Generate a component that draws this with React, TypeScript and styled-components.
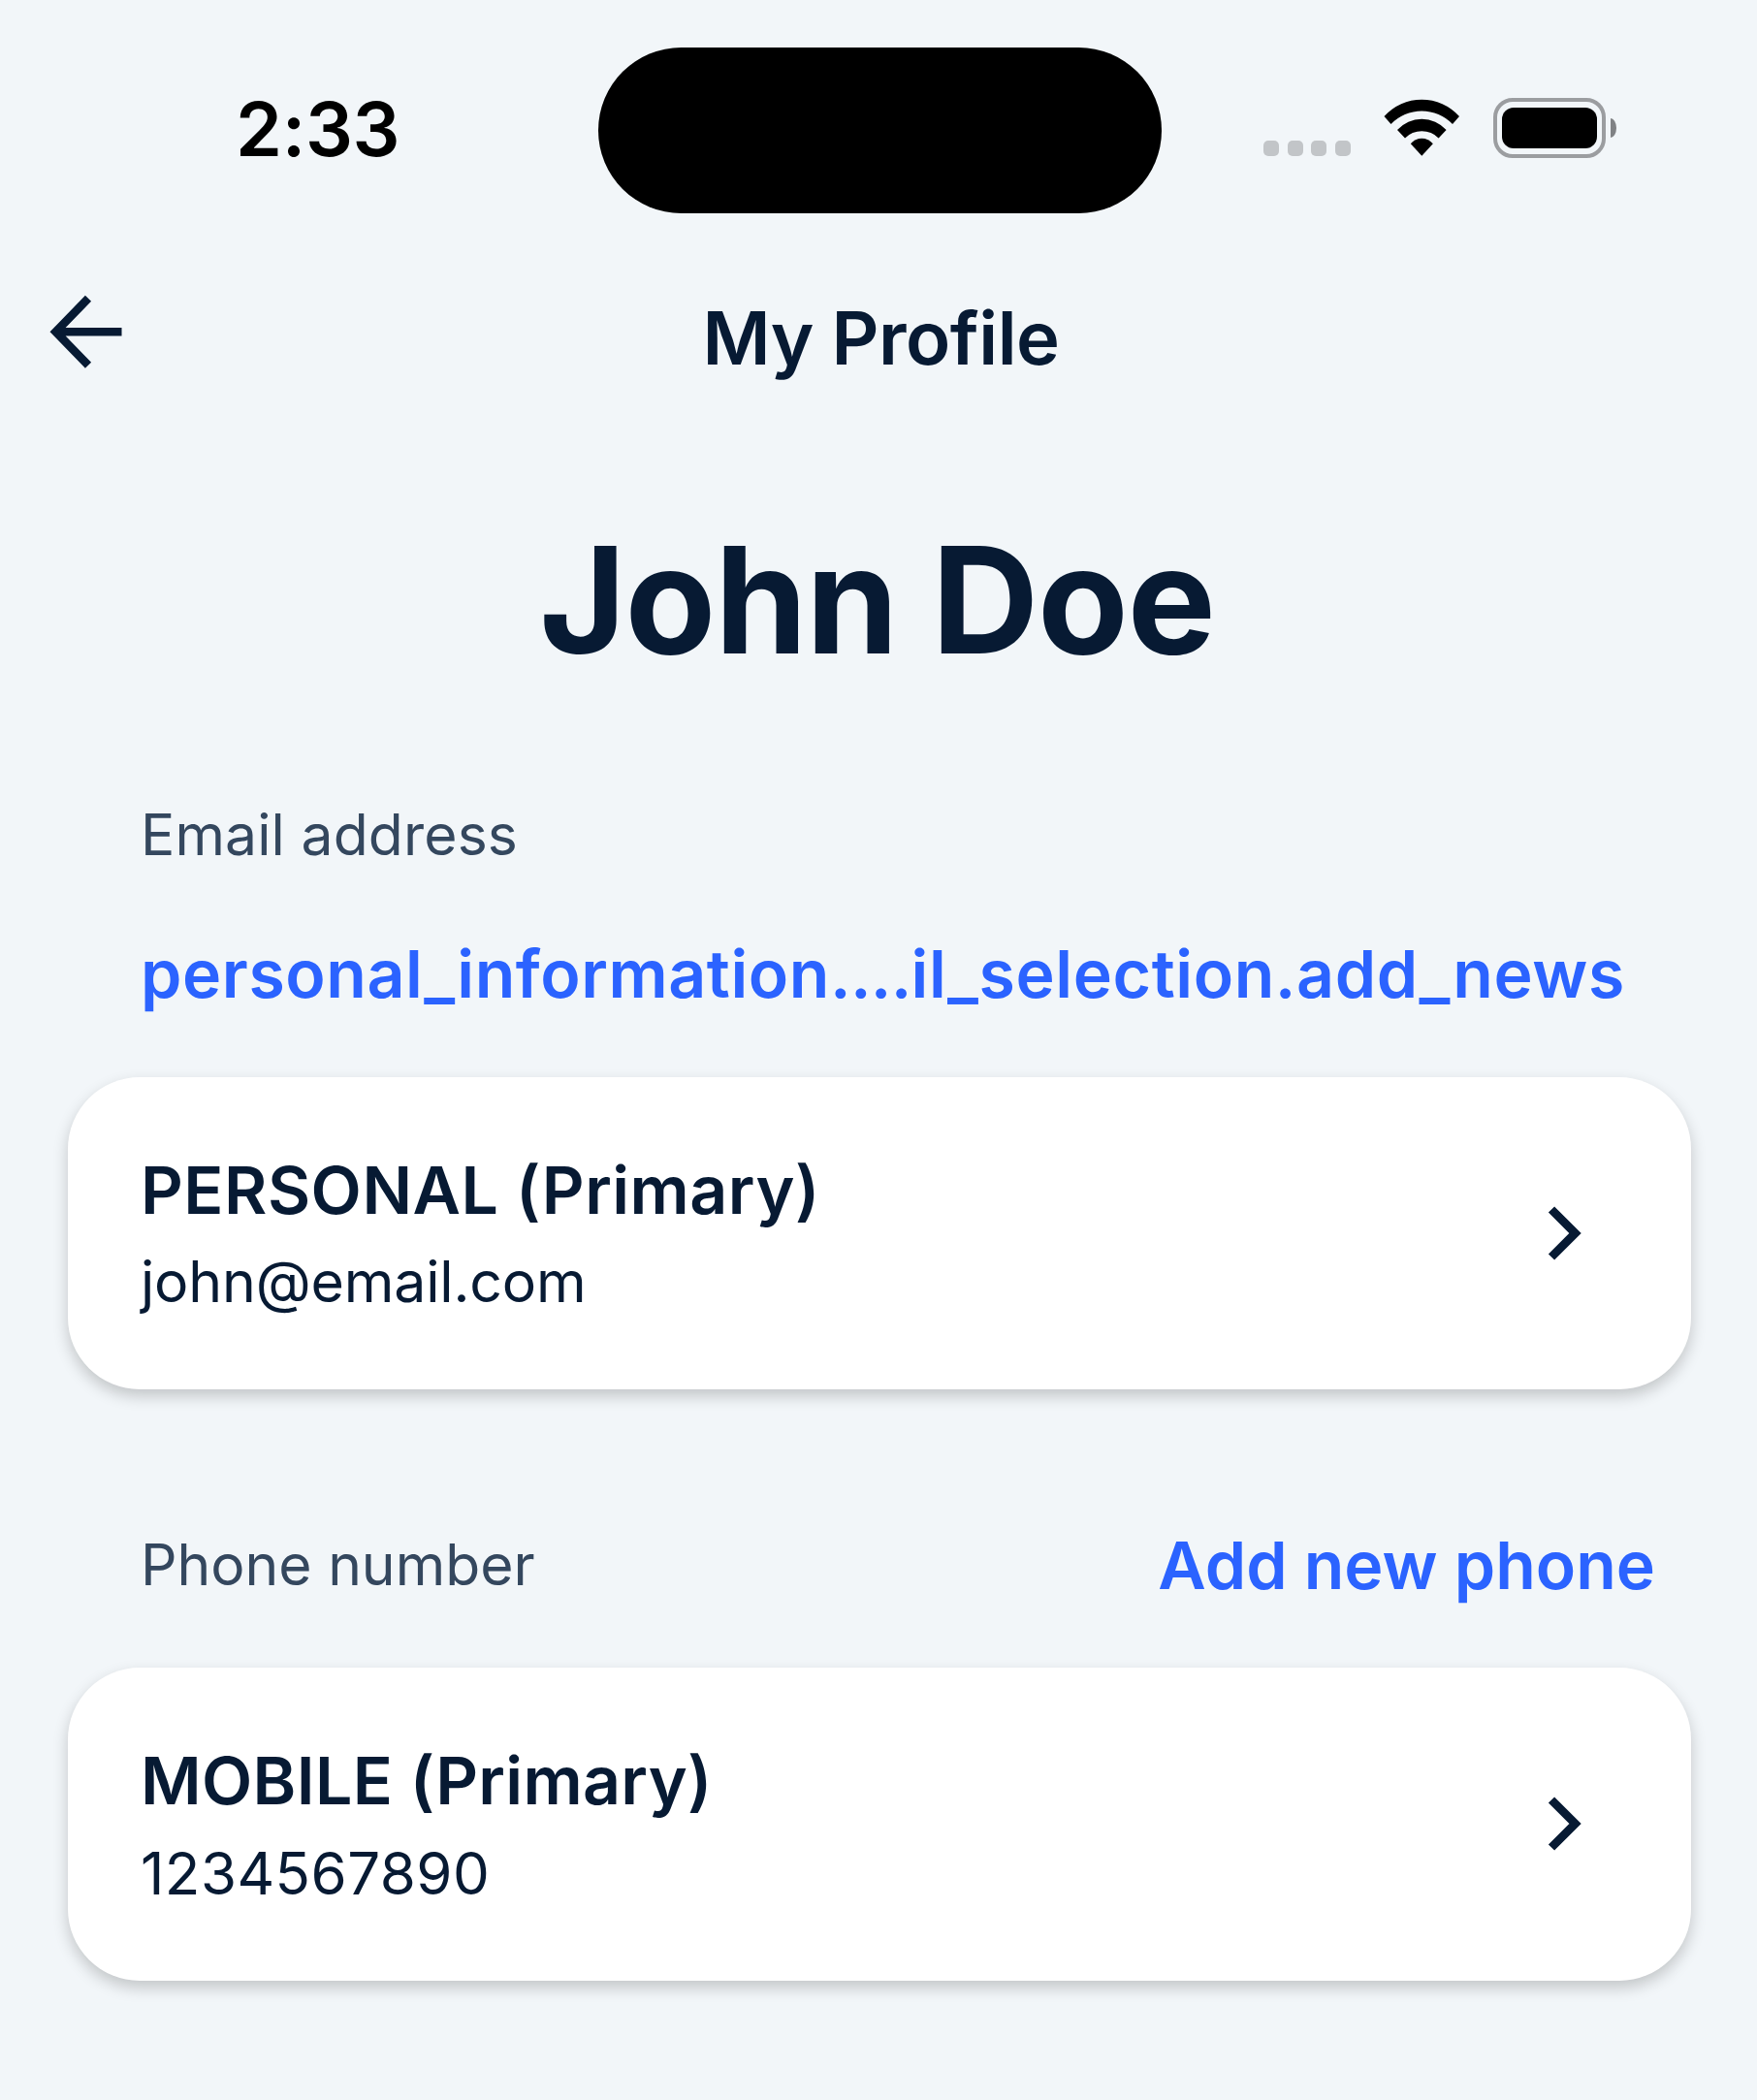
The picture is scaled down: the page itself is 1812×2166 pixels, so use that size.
import React from "react";
import styled, { createGlobalStyle } from "styled-components";

const ink = "#071a33";
const blue = "#2b63ff";

const GlobalStyle = createGlobalStyle`
  *, *::before, *::after { box-sizing: border-box; }
  body { margin: 0; background: #f2f6f9; }
  button { border: 0; padding: 0; background: none; font: inherit; color: inherit; text-align: left; }
  h1, h2, p { margin: 0; }
`;

const Screen = styled.main`
  width: 1812px;
  height: 2166px;
  overflow: hidden;
  background: #f2f6f9;
  color: ${ink};
  font-family: Inter, "Liberation Sans", sans-serif;
  white-space: nowrap;
`;

const StatusBar = styled.div`
  display: grid;
  grid-template-columns: 617px 581px 1fr;
  align-items: center;
  height: 268px;
`;

const Clock = styled.time`
  padding: 0 0 3px 243px;
  font-size: 77px;
  font-weight: 600;
  line-height: 96px;
  letter-spacing: -0.3px;
  color: #000;
`;

const Island = styled.div`
  height: 171px;
  border-radius: 86px;
  background: #000;
`;

const StatusIcons = styled.div`
  display: flex;
  align-items: center;
  padding: 0 0 4px 105px;
`;

const SignalDots = styled.div`
  display: flex;
  gap: 8.6px;
  padding-top: 42px;
`;

const Dot = styled.i`
  width: 16px;
  height: 16px;
  border-radius: 5px;
  background: #c2c5c8;
`;

const WifiIcon = styled.svg`
  width: 80px;
  height: 60px;
  margin-left: 34.2px;
`;

const Battery = styled.div`
  display: flex;
  align-items: center;
  gap: 5px;
  margin-left: 33px;
`;

const BatteryShell = styled.div`
  width: 116px;
  height: 62px;
  padding: 6px 5px;
  border: 4px solid #9b9da0;
  border-radius: 20px;
`;

const BatteryFill = styled.div`
  height: 100%;
  border-radius: 12px;
  background: #000;
`;

const BatteryTip = styled.div`
  width: 6px;
  height: 20px;
  border-radius: 0 6px 6px 0 / 0 10px 10px 0;
  background: #808285;
`;

const Header = styled.header`
  display: grid;
  grid-template-columns: 150px 1fr 150px;
  align-items: center;
  height: 160px;
`;

const BackButton = styled.button`
  display: flex;
  padding: 0 0 13px 50px;
`;

const Title = styled.h1`
  padding-left: 5px;
  font-size: 76px;
  font-weight: 600;
  line-height: 96px;
  letter-spacing: -0.5px;
  text-align: center;
`;

const Name = styled.h2`
  padding: 100px 3px 106.5px 0;
  font-size: 153px;
  font-weight: 700;
  line-height: 181px;
  letter-spacing: -1.1px;
  text-align: center;
`;

const SectionHead = styled.div<{ $stacked?: boolean }>`
  display: flex;
  flex-direction: ${(p) => (p.$stacked ? "column" : "row")};
  justify-content: space-between;
  align-items: ${(p) => (p.$stacked ? "flex-start" : "center")};
  gap: ${(p) => (p.$stacked ? 53 : 0)}px;
  padding: 0 105px 0 145px;
`;

const Label = styled.p<{ $track: number }>`
  font-size: 58.8px;
  line-height: 90px;
  letter-spacing: ${(p) => p.$track}px;
  color: #34475e;
`;

const Link = styled.button<{ $track: number }>`
  font-size: 68px;
  font-weight: 600;
  line-height: 90px;
  letter-spacing: ${(p) => p.$track}px;
  color: ${blue};
`;

const Ellipsis = styled.span`
  letter-spacing: -0.8px;
`;

const Card = styled.button<{ $top: number; $bottom: number }>`
  display: flex;
  justify-content: space-between;
  align-items: center;
  width: 1674px;
  height: 322.5px;
  margin: ${(p) => p.$top}px 0 ${(p) => p.$bottom}px 70px;
  padding: 0 111px 0 75px;
  border-radius: 74px;
  background: #fff;
  box-shadow: 0 7px 16px rgba(0, 0, 0, 0.2);
`;

const CardText = styled.div`
  display: flex;
  flex-direction: column;
  gap: 5.5px;
  padding-top: 5px;
`;

const CardTitle = styled.span<{ $track: number }>`
  font-size: 68px;
  font-weight: 600;
  line-height: 90px;
  letter-spacing: ${(p) => p.$track}px;
`;

const CardValue = styled.span<{ $size: number; $track: number }>`
  font-size: ${(p) => p.$size}px;
  line-height: 90px;
  letter-spacing: ${(p) => p.$track}px;
`;

const Chevron = () => (
  <svg width="38" height="60" viewBox="0 0 38 60" fill="none" stroke={ink} strokeWidth="8.8">
    <path d="M5 5.5 29.5 30 5 54.5" />
  </svg>
);

const Wifi = () => (
  <WifiIcon viewBox="0 0 80 60">
    <path d="M.5 18A52 52 0 0 1 78 18L71 26A44 44 0 0 0 7.5 26Z" />
    <path d="M14 32A34 34 0 0 1 64.6 32L56.6 40.5A24 24 0 0 0 22 40.5Z" />
    <path d="M27.8 46.3A14.8 14.8 0 0 1 50.8 46.3L39.3 58.8Z" />
  </WifiIcon>
);

export default function App() {
  return (
    <Screen>
      <GlobalStyle />
      <StatusBar>
        <Clock>2:33</Clock>
        <Island />
        <StatusIcons>
          <SignalDots>
            <Dot />
            <Dot />
            <Dot />
            <Dot />
          </SignalDots>
          <Wifi />
          <Battery>
            <BatteryShell>
              <BatteryFill />
            </BatteryShell>
            <BatteryTip />
          </Battery>
        </StatusIcons>
      </StatusBar>

      <Header>
        <BackButton aria-label="Back">
          <svg width="78" height="78" viewBox="0 0 78 78" fill="none" stroke={ink} strokeWidth="8.6">
            <path d="M41 4.8 7.5 39.3 41 73.8M8 39.3H75.5" />
          </svg>
        </BackButton>
        <Title>My Profile</Title>
      </Header>

      <Name>John Doe</Name>

      <SectionHead $stacked>
        <Label $track={0.12}>Email address</Label>
        <Link $track={0.58}>
          personal_information<Ellipsis>....</Ellipsis>il_selection.add_news
        </Link>
      </SectionHead>
      <Card $top={62} $bottom={136}>
        <CardText>
          <CardTitle $track={0.5}>PERSONAL (Primary)</CardTitle>
          <CardValue $size={59} $track={-0.17}>john@email.com</CardValue>
        </CardText>
        <Chevron />
      </Card>

      <SectionHead>
        <Label $track={0}>Phone number</Label>
        <Link $track={0}>Add new phone</Link>
      </SectionHead>
      <Card $top={61} $bottom={0}>
        <CardText>
          <CardTitle $track={0.32}>MOBILE (Primary)</CardTitle>
          <CardValue $size={60} $track={0.45}>1234567890</CardValue>
        </CardText>
        <Chevron />
      </Card>
    </Screen>
  );
}
